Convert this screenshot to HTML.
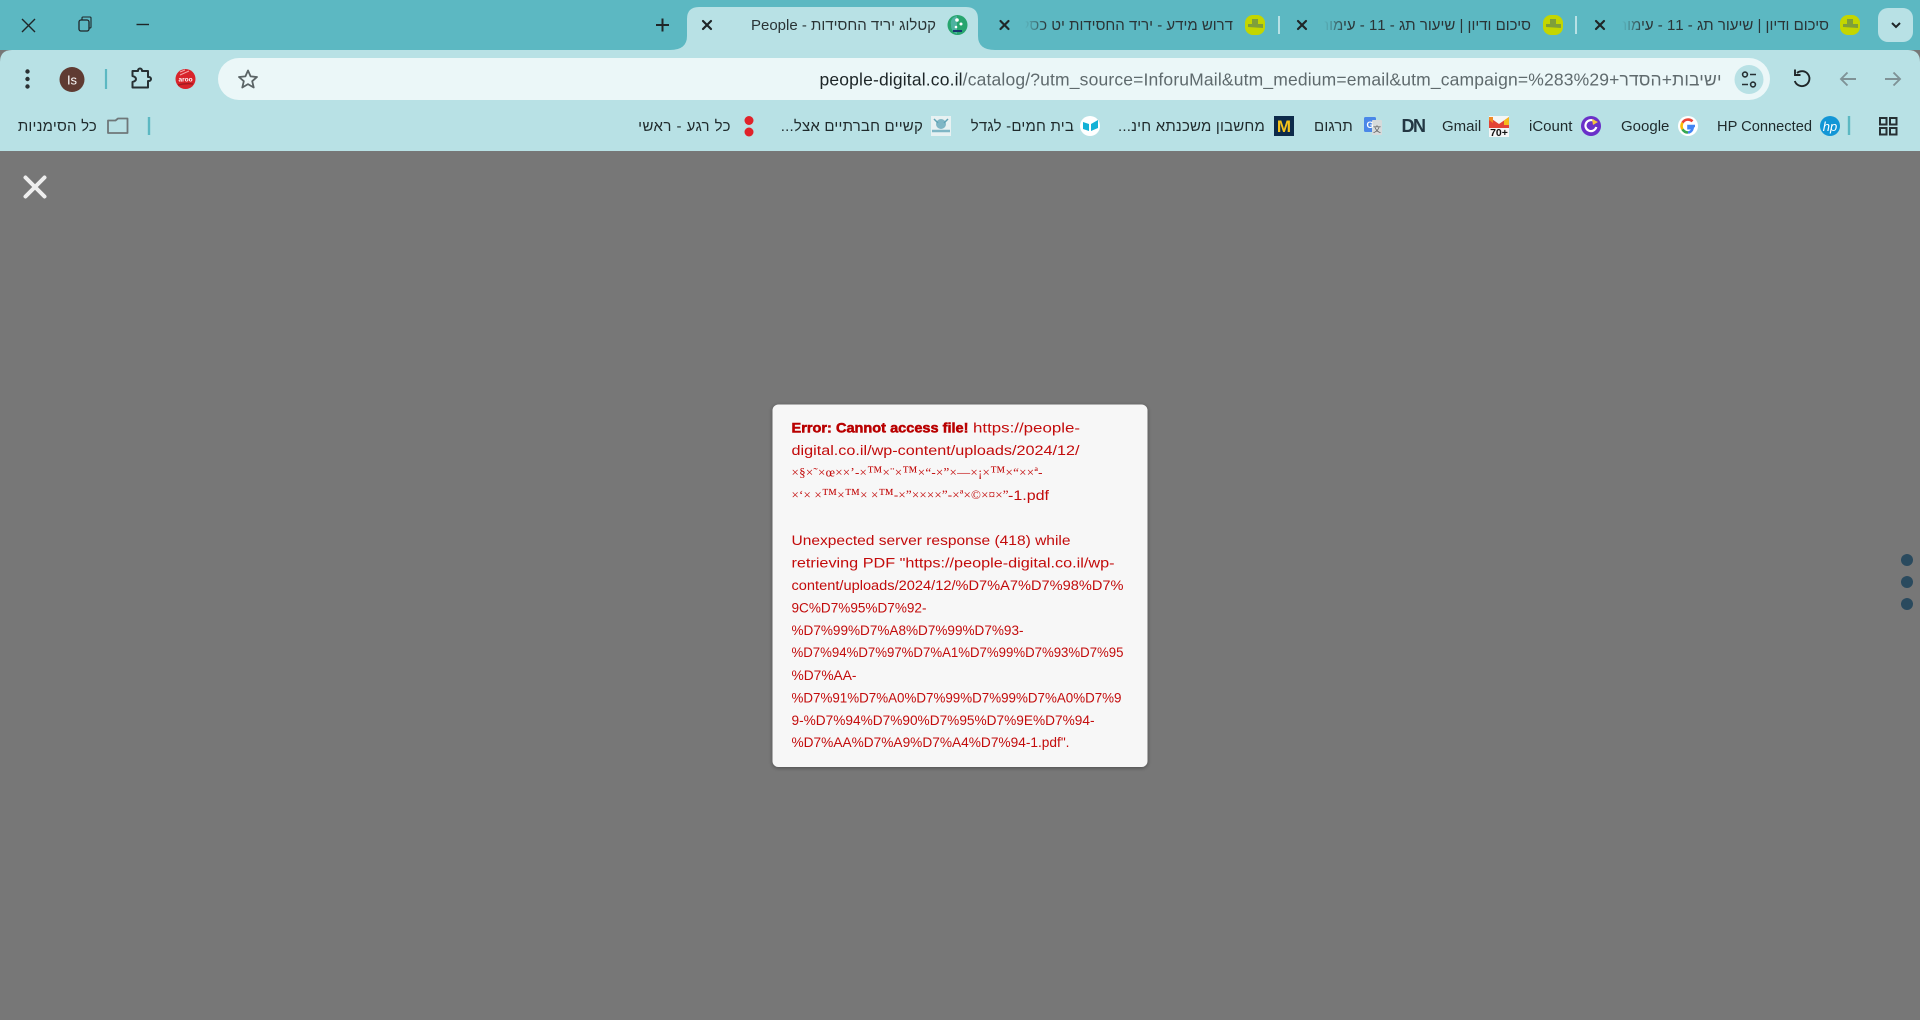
<!DOCTYPE html>
<html lang="he"><head><meta charset="utf-8"><title>People - קטלוג יריד החסידות</title>
<style>
html,body{margin:0;padding:0;width:1920px;height:1020px;overflow:hidden;background:#777}
svg{display:block;position:absolute;left:0;top:0}
text{font-family:"Liberation Sans","Noto Sans CJK JP",sans-serif;white-space:pre}
.t{font-size:15px;fill:#2a3436;direction:rtl}
.b{font-size:15px;fill:#1f2a2c;direction:rtl;letter-spacing:.2px}
.m{font-size:13.5px;fill:#c30b0b}
.s{font-family:"Liberation Serif",serif;font-size:13px;fill:#c30b0b}
.s .k{font-size:15.5px}
.x{stroke:#1f2628;stroke-width:2.2;fill:none;stroke-linecap:round}
</style></head><body>
<svg width="1920" height="1020" viewBox="0 0 1920 1020" xmlns="http://www.w3.org/2000/svg">
<defs>
<linearGradient id="fade" x1="0" x2="1" y1="0" y2="0"><stop offset="0" stop-color="#5cb8c2"/><stop offset="1" stop-color="#5cb8c2" stop-opacity="0"/></linearGradient>
<clipPath id="c1"><rect x="1025" y="8" width="215" height="36"/></clipPath>
<clipPath id="c2"><rect x="1324" y="8" width="215" height="36"/></clipPath>
<clipPath id="c3"><rect x="1622" y="8" width="215" height="36"/></clipPath>
<filter id="sh" x="-10%" y="-10%" width="120%" height="120%"><feDropShadow dx="0" dy="1" stdDeviation="2" flood-color="#000" flood-opacity=".35"/></filter>
<g id="fav"><rect x="-10" y="-10" width="20" height="20" rx="8" fill="#c4d600"/><path d="M-7 -1H-3V-6H3V-1H8V3L-7 2Z" fill="#7f9f3a"/></g>
</defs>
<rect width="1920" height="1020" fill="#777"/>
<rect width="1920" height="50" fill="#5cb8c2"/>
<path d="M0 151V62Q0 50 12 50H1908Q1920 50 1920 62V151Z" fill="#b8e1e5"/>
<path d="M670 50Q687 50 687 36V19Q687 7 699 7H966Q978 7 978 19V36Q978 50 995 50Z" fill="#b8e1e5"/>

<!-- window controls -->
<path d="M22 19L35 32M35 19L22 32" stroke="#1f2628" stroke-width="1.4" fill="none"/>
<rect x="79" y="20" width="10" height="11" rx="2" fill="none" stroke="#1f2628" stroke-width="1.3"/>
<path d="M82 20V18Q82 17 83 17H90Q91 17 91 18V27Q91 28 90 28H89" fill="none" stroke="#1f2628" stroke-width="1.1"/>
<path d="M136.500 24.500H149" stroke="#1f2628" stroke-width="1.4"/>
<path d="M656 25H669M662.500 18.500V31.500" stroke="#1f2628" stroke-width="2"/>

<!-- tabs -->
<path class="x" d="M703 21L711 29M711 21L703 29"/>
<text class="t" x="936" y="30">קטלוג יריד החסידות - People</text>
<circle cx="957.500" cy="25" r="10" fill="#27a56e"/><path d="M951 25A7 7 0 0 1 957 16V34A9 9 0 0 1 951 25Z" fill="#4db2a0"/><circle cx="957" cy="20" r="1.800" fill="#fff"/><circle cx="961" cy="24" r="1.500" fill="#fff"/><circle cx="956" cy="27" r="1.300" fill="#fff"/><path d="M953 31H962" stroke="#16356e" stroke-width="2"/>

<path class="x" d="M1000.500 21L1008.500 29M1008.500 21L1000.500 29"/>
<g clip-path="url(#c1)"><text class="t" x="1233" y="30">דרוש מידע - יריד החסידות יט כסלו</text></g>
<rect x="1025" y="8" width="22" height="36" fill="url(#fade)"/>
<use href="#fav" x="1255" y="25"/>
<path d="M1279 16V34" stroke="#b8e1e5" stroke-width="2"/>

<path class="x" d="M1298 21L1306 29M1306 21L1298 29"/>
<g clip-path="url(#c2)"><text class="t" x="1531" y="30">סיכום ודיון | שיעור תג - 11 - עימות</text></g>
<rect x="1324" y="8" width="22" height="36" fill="url(#fade)"/>
<use href="#fav" x="1553" y="25"/>
<path d="M1576 16V34" stroke="#b8e1e5" stroke-width="2"/>

<path class="x" d="M1596 21L1604 29M1604 21L1596 29"/>
<g clip-path="url(#c3)"><text class="t" x="1829" y="30">סיכום ודיון | שיעור תג - 11 - עימות</text></g>
<rect x="1622" y="8" width="22" height="36" fill="url(#fade)"/>
<use href="#fav" x="1850" y="25"/>
<rect x="1878" y="8" width="35" height="34" rx="10" fill="#b8e1e5"/>
<path d="M1892 23L1896 27L1900 23" fill="none" stroke="#1f2628" stroke-width="2"/>

<!-- toolbar left -->
<circle cx="27.500" cy="71.500" r="2.200" fill="#2a3133"/><circle cx="27.500" cy="79" r="2.200" fill="#2a3133"/><circle cx="27.500" cy="86.500" r="2.200" fill="#2a3133"/>
<circle cx="72" cy="79.500" r="12.500" fill="#5f3b32"/>
<text x="72" y="84.500" text-anchor="middle" style="font-size:13px;fill:#fff">Is</text>
<path d="M106 69V89" stroke="#5cb8c2" stroke-width="2.200"/>
<path d="M132.500 71H138V70.500A2 2 0 0 1 142 70.500V71H148V77H149A2 2 0 0 1 149 81H148V87.500H132.500V82Q136 81 136 79Q136 77 132.500 76Z" fill="none" stroke="#263033" stroke-width="2" stroke-linejoin="round"/>
<circle cx="185.500" cy="79" r="10" fill="#d8232a"/><path d="M180 72L185 70M180 75L189 71" stroke="#f3a5a5" stroke-width="1"/><text x="185.500" y="81.500" text-anchor="middle" style="font-size:6.500px;font-weight:bold;fill:#fff">aroo</text><path d="M178 85Q186 83 193 84" stroke="#a51a1e" stroke-width="1.500" fill="none"/>

<!-- address bar -->
<rect x="218" y="58" width="1552" height="42" rx="21" fill="#ebf7f8"/>
<path d="M248 70.500L250.600 76.400L257 77L252.200 81.200L253.700 87.500L248 84.100L242.300 87.500L243.800 81.200L239 77L245.400 76.400Z" fill="none" stroke="#5b6466" stroke-width="1.800" stroke-linejoin="round"/>
<text x="819.500" y="85.500" style="font-size:17.500px;fill:#5f6a6d;direction:ltr" textLength="902"><tspan fill="#1d2527">people-digital.co.il</tspan>/catalog/?utm_source=InforuMail&amp;utm_medium=email&amp;utm_campaign=%283%29+ישיבות+הסדר</text>
<circle cx="1749" cy="79.500" r="14.500" fill="#b8e1e5"/>
<circle cx="1745" cy="74.500" r="2.400" fill="none" stroke="#263033" stroke-width="1.600"/><path d="M1750 74.500H1756M1742 84.500H1748" stroke="#263033" stroke-width="1.600"/><circle cx="1753" cy="84.500" r="2.400" fill="none" stroke="#263033" stroke-width="1.600"/>

<!-- nav -->
<path d="M1797 73A7.500 7.500 0 1 1 1794.800 81" fill="none" stroke="#1f2628" stroke-width="1.900"/><path d="M1795 69.500V75H1800.500" fill="none" stroke="#1f2628" stroke-width="1.900"/>
<path d="M1856 79H1841M1847.500 72.500L1841 79L1847.500 85.500" fill="none" stroke="#7f9296" stroke-width="1.900"/>
<path d="M1885 79H1900M1893.500 72.500L1900 79L1893.500 85.500" fill="none" stroke="#7f9296" stroke-width="1.900"/>

<!-- bookmarks -->
<text class="b" x="97" y="131">כל הסימניות</text>
<path d="M108 120.500H115.500L118 118.500H127.500V133H108Z" fill="none" stroke="#6f7779" stroke-width="1.800" stroke-linejoin="round"/>
<path d="M149 117V135" stroke="#5cb8c2" stroke-width="2.400"/>
<text class="b" x="731" y="131" style="letter-spacing:.45px">כל רגע - ראשי</text>
<circle cx="749" cy="120.500" r="4.500" fill="#e0222a"/><circle cx="749" cy="132" r="4.500" fill="#e0222a"/>
<text class="b" x="923" y="131">קשיים חברתיים אצל...</text>
<rect x="931" y="116" width="20" height="20" fill="#e7f1f2"/><circle cx="941" cy="124" r="5" fill="#7fb6c5"/><path d="M932 131H950" stroke="#7fb6c5" stroke-width="2.500"/><path d="M934 119L938 123M948 119L944 123" stroke="#5fa2b5" stroke-width="1.500"/>
<text class="b" x="1074" y="131">בית חמים- לגדל</text>
<circle cx="1090" cy="126" r="10" fill="#fff"/><path d="M1083 122L1089 124V131L1083 129ZM1091 124L1098 120V128L1091 131Z" fill="#14b1d6"/>
<text class="b" x="1265" y="131">מחשבון משכנתא חינ...</text>
<rect x="1274" y="116" width="20" height="20" fill="#0d2a4a"/><text x="1284" y="132" text-anchor="middle" style="font-size:17px;font-weight:bold;fill:#f4c21b">M</text>
<text class="b" x="1353" y="131">תרגום</text>
<rect x="1364" y="117" width="12" height="15" rx="1.500" fill="#4a87e8"/><rect x="1372" y="120" width="10" height="15" rx="1" fill="#d6dadb"/><text x="1370" y="128" text-anchor="middle" style="font-size:9px;font-weight:bold;fill:#fff">G</text><text x="1377" y="132" text-anchor="middle" style="font-size:8px;fill:#555">文</text>
<text x="1413" y="132" text-anchor="middle" style="font-size:18px;font-weight:bold;fill:#233743;letter-spacing:-1.500px">DN</text>
<text x="1442" y="131" style="font-size:15px;fill:#1f2a2c">Gmail</text>
<rect x="1489" y="116" width="20" height="21" fill="#f4f6f6"/><path d="M1489 128V117L1499 124L1509 117V128" fill="#e34335" stroke="none"/><path d="M1504 120.500L1509 117V125H1504Z" fill="#f6bb1b"/><path d="M1489 117H1493V123L1489 120Z" fill="#f08a24"/>
<text x="1499" y="136" text-anchor="middle" style="font-size:10.500px;font-weight:bold;fill:#111">70+</text>
<text x="1529" y="131" style="font-size:15px;fill:#1f2a2c">iCount</text>
<circle cx="1591" cy="126" r="10" fill="#6a30c9"/><path d="M1594 121A5.500 5.500 0 1 0 1596.300 127" fill="none" stroke="#fff" stroke-width="2.200"/><path d="M1592 119L1598 122L1593 125Z" fill="#f5c33b"/>
<text x="1621" y="131" style="font-size:15px;fill:#1f2a2c">Google</text>
<circle cx="1688" cy="126" r="10" fill="#fff"/>
<path d="M1695 126H1688.500V128.200H1692.600A5.200 5.200 0 0 1 1688 132.500" fill="none" stroke="#4285f4" stroke-width="2.600"/>
<path d="M1692.500 121.300A6.500 6.500 0 0 0 1682.500 122.700" fill="none" stroke="#ea4335" stroke-width="2.600"/>
<path d="M1682.500 122.700A6.500 6.500 0 0 0 1682.500 129.300" fill="none" stroke="#fbbc05" stroke-width="2.600"/>
<path d="M1682.500 129.300A6.500 6.500 0 0 0 1688 132.500" fill="none" stroke="#34a853" stroke-width="2.600"/>
<text x="1717" y="131" style="font-size:15px;fill:#1f2a2c" textLength="95" lengthAdjust="spacingAndGlyphs">HP Connected</text>
<circle cx="1830" cy="126" r="10" fill="#1296d6"/><text x="1830" y="131" text-anchor="middle" style="font-size:13px;font-style:italic;fill:#fff">hp</text>
<path d="M1849 116V135" stroke="#5cb8c2" stroke-width="2.400"/>
<g fill="none" stroke="#263033" stroke-width="2"><rect x="1880" y="118" width="6.500" height="6.500"/><rect x="1890" y="118" width="6.500" height="6.500"/><rect x="1880" y="128" width="6.500" height="6.500"/><rect x="1890" y="128" width="6.500" height="6.500"/></g>

<!-- overlay -->
<path d="M25.500 177.500L44.500 196.500M44.500 177.500L25.500 196.500" stroke="#eeeeee" stroke-width="4" stroke-linecap="round"/>
<circle cx="1907" cy="560" r="6" fill="#2a4a5e"/><circle cx="1907" cy="582" r="6" fill="#2a4a5e"/><circle cx="1907" cy="604" r="6" fill="#2a4a5e"/>

<!-- modal -->
<rect x="772.500" y="404.500" width="375" height="362.500" rx="6" fill="#f7f7f7" filter="url(#sh)"/>
<text class="m" x="791.500" y="432.500" style="font-weight:bold;fill:#b90000;stroke:#b90000;stroke-width:.5px" textLength="177" lengthAdjust="spacingAndGlyphs">Error: Cannot access file!</text>
<text class="m" x="973" y="432.500" textLength="107" lengthAdjust="spacingAndGlyphs">https://people-</text>
<text class="m" x="791.500" y="455" textLength="288" lengthAdjust="spacingAndGlyphs">digital.co.il/wp-content/uploads/2024/12/</text>
<text class="s" x="791.500" y="476.500" textLength="251" lengthAdjust="spacing">×§×˜×œ××’-×<tspan class="k">™</tspan>×¨×<tspan class="k">™</tspan>×“-×”×—×¡×<tspan class="k">™</tspan>×“××ª-</text>
<text class="s" x="791.500" y="499" textLength="217" lengthAdjust="spacing">×‘× ×<tspan class="k">™</tspan>×<tspan class="k">™</tspan>× ×<tspan class="k">™</tspan>-×”××××”-×ª×©×¤×”</text>
<text class="m" x="1008" y="500" textLength="41" lengthAdjust="spacingAndGlyphs">-1.pdf</text>
<text class="m" x="791.500" y="545" textLength="279" lengthAdjust="spacingAndGlyphs">Unexpected server response (418) while</text>
<text class="m" x="791.500" y="567.500" textLength="323" lengthAdjust="spacingAndGlyphs">retrieving PDF "https://people-digital.co.il/wp-</text>
<text class="m" x="791.500" y="590" textLength="332" lengthAdjust="spacingAndGlyphs">content/uploads/2024/12/%D7%A7%D7%98%D7%</text>
<text class="m" x="791.500" y="612.500" textLength="135" lengthAdjust="spacingAndGlyphs">9C%D7%95%D7%92-</text>
<text class="m" x="791.500" y="635" textLength="232" lengthAdjust="spacingAndGlyphs">%D7%99%D7%A8%D7%99%D7%93-</text>
<text class="m" x="791.500" y="657" textLength="332" lengthAdjust="spacingAndGlyphs">%D7%94%D7%97%D7%A1%D7%99%D7%93%D7%95</text>
<text class="m" x="791.500" y="680" textLength="65" lengthAdjust="spacingAndGlyphs">%D7%AA-</text>
<text class="m" x="791.500" y="702.500" textLength="330" lengthAdjust="spacingAndGlyphs">%D7%91%D7%A0%D7%99%D7%99%D7%A0%D7%9</text>
<text class="m" x="791.500" y="725" textLength="303" lengthAdjust="spacingAndGlyphs">9-%D7%94%D7%90%D7%95%D7%9E%D7%94-</text>
<text class="m" x="791.500" y="747" textLength="278" lengthAdjust="spacingAndGlyphs">%D7%AA%D7%A9%D7%A4%D7%94-1.pdf".</text>
</svg>
</body></html>
